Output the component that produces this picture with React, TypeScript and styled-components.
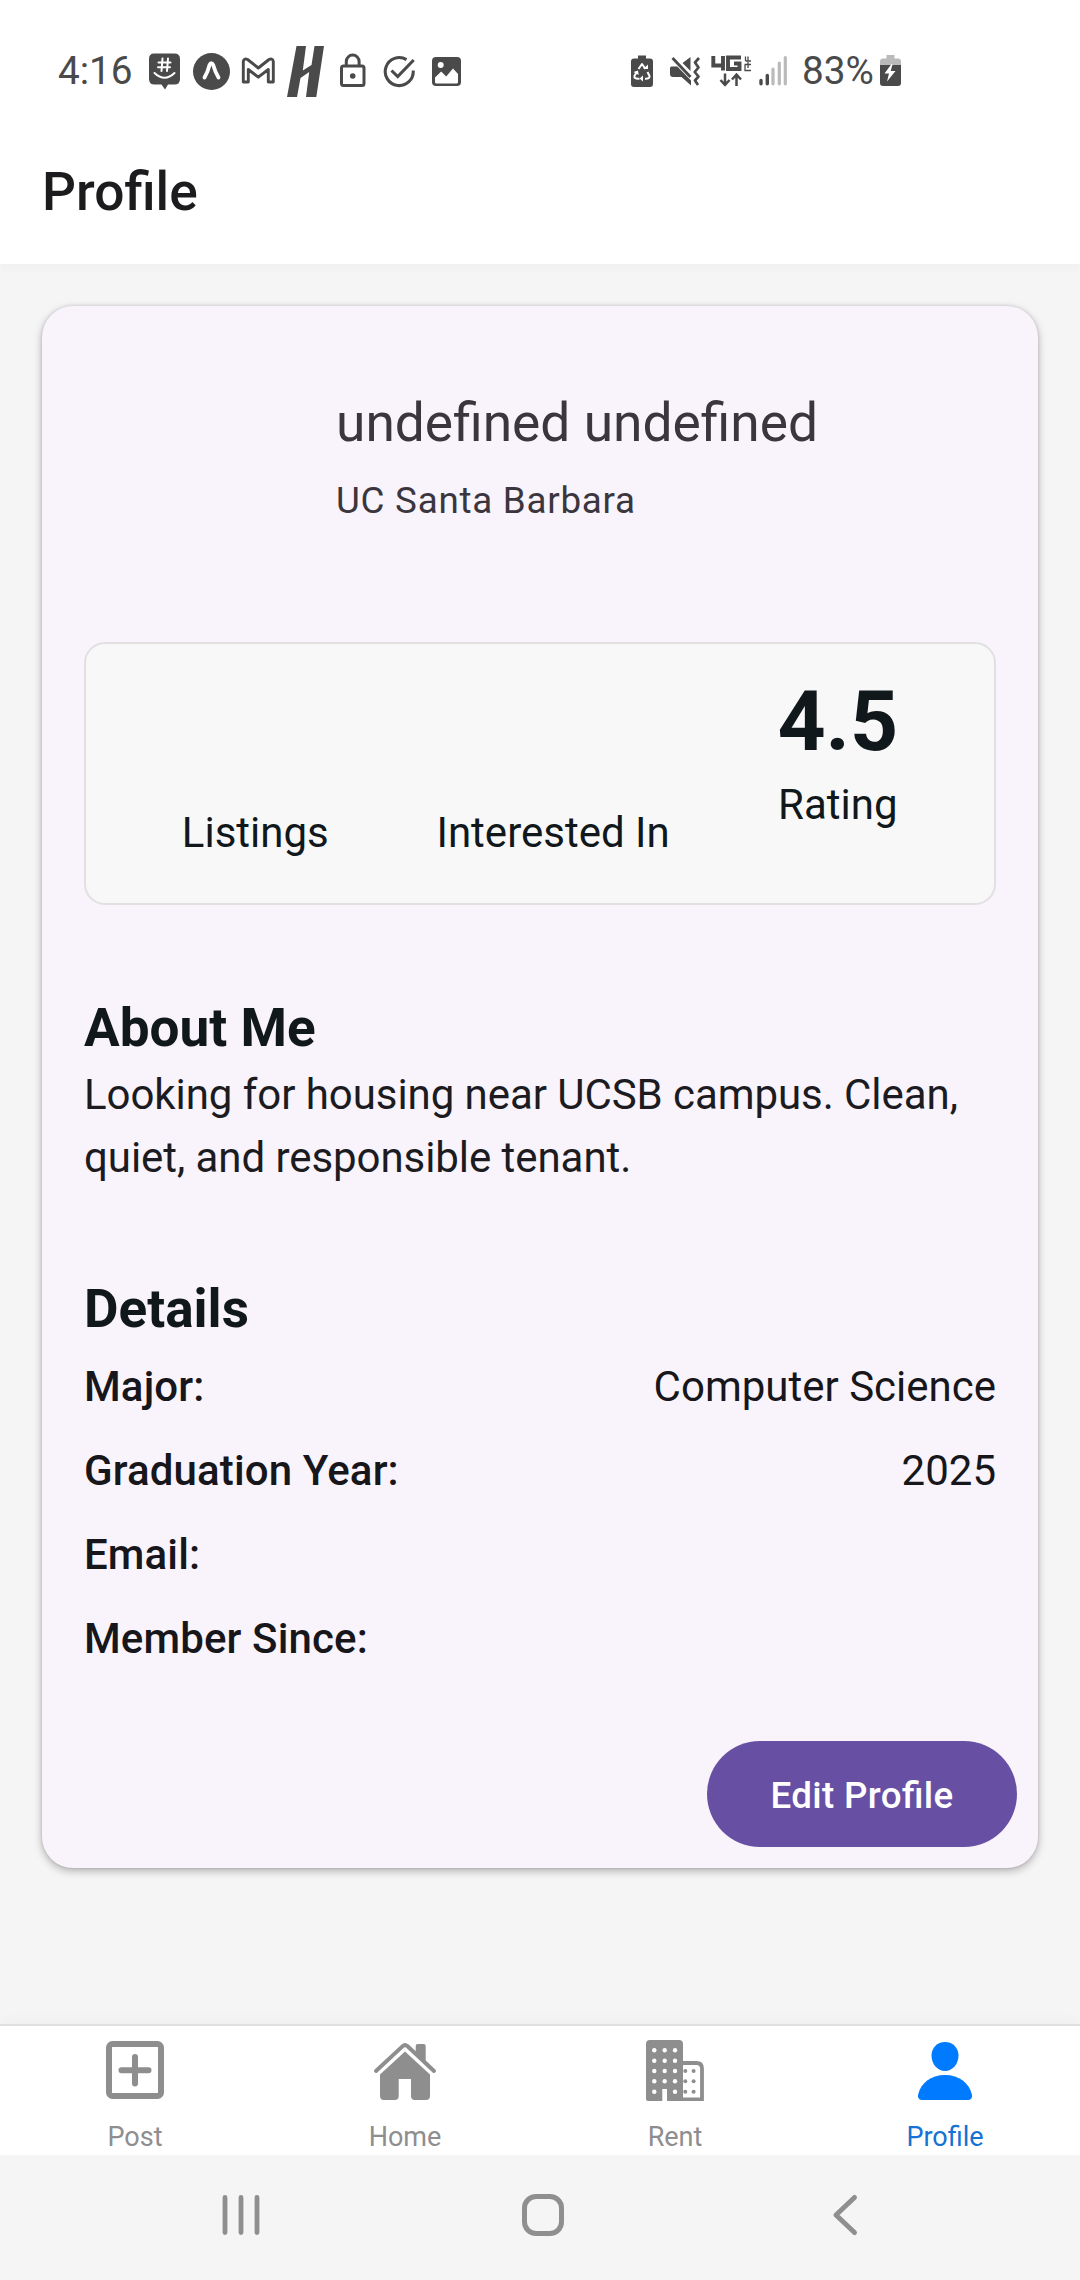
import React from "react";
import styled, { createGlobalStyle } from "styled-components";

const GlobalStyle = createGlobalStyle`
  * { box-sizing: border-box; }
  body {
    margin: 0;
    background: #f5f5f5;
    font-family: Roboto, "Noto Sans", sans-serif;
    font-feature-settings: "liga" 1;
  }
`;

const Screen = styled.div`
  width: 1080px;
  height: 2280px;
  display: flex;
  flex-direction: column;
  background: #f5f5f5;
  overflow: hidden;
`;

const StatusBar = styled.div`
  height: 122px;
  padding: 46px 179px 0 58px;
  display: flex;
  justify-content: space-between;
  background: #fff;
  color: #4a4a4a;
`;

const StatusGroup = styled.div`
  display: flex;
  align-items: flex-start;
  height: 52px;
`;

const StatusText = styled.span<{ $width: number; $gap?: number }>`
  width: ${(p) => p.$width}px;
  margin-left: ${(p) => p.$gap ?? 0}px;
  font-size: 38.7px;
  line-height: 50px;
  white-space: nowrap;
`;

const StatusGlyph = styled.svg<{ $gap: number }>`
  display: block;
  flex: none;
  margin-left: ${(p) => p.$gap}px;
`;

const Header = styled.header`
  height: 142px;
  padding: 39px 42px 0;
  background: #fff;
  box-shadow: 0 8px 1px -1px #f2f2f2;
`;

const HeaderTitle = styled.h1`
  margin: 0;
  font-size: 53.3px;
  line-height: 63px;
  font-weight: 500;
  color: #1c1c1e;
`;

const Content = styled.main`
  flex: 1;
  padding: 42px 42px 0;
`;

const Card = styled.section`
  height: 1562px;
  display: flex;
  flex-direction: column;
  padding: 86px 42px 21px;
  border-radius: 31px;
  background: #f9f3fb;
  box-shadow: 0 3px 8px rgba(0, 0, 0, 0.28), 0 0 3px rgba(0, 0, 0, 0.14);
`;

const Identity = styled.div`
  height: 250px;
  padding-left: 252px;
`;

const Name = styled.div`
  font-size: 53.3px;
  line-height: 63px;
  color: #3b363d;
`;

const School = styled.div`
  margin-top: 19px;
  font-size: 36.75px;
  line-height: 53px;
  letter-spacing: 0.75px;
  color: #3b363d;
`;

const Stats = styled.div`
  height: 263px;
  display: flex;
  justify-content: space-around;
  align-items: flex-start;
  padding: 24px 42px 0;
  border: 2.6px solid #e0e0e0;
  border-radius: 21px;
  background: #f8f8f8;
`;

const Stat = styled.div`
  display: flex;
  flex-direction: column;
  align-items: center;
  color: #11181c;
`;

const StatValue = styled.div<{ $empty: boolean }>`
  height: ${(p) => (p.$empty ? 133 : 105)}px;
  font-size: 84px;
  line-height: 107px;
  font-weight: 700;
`;

const StatLabel = styled.div`
  font-size: 42px;
  line-height: 63px;
`;

const Section = styled.section<{ $top: number }>`
  margin-top: ${(p) => p.$top}px;
`;

const SectionTitle = styled.h2<{ $gap: number }>`
  margin: 0 0 ${(p) => p.$gap}px;
  font-size: 53.1px;
  line-height: 63px;
  font-weight: 700;
  color: #11181c;
`;

const Paragraph = styled.p`
  margin: 0;
  font-size: 42px;
  line-height: 63px;
  letter-spacing: -0.06px;
  color: #1c1b1f;
`;

const DetailRow = styled.div`
  display: flex;
  justify-content: space-between;
  margin-bottom: 21px;
  font-size: 42px;
  line-height: 63px;
  color: #16161b;
`;

const DetailLabel = styled.span`
  font-weight: 500;
  letter-spacing: 0.13px;
`;

const DetailValue = styled.span``;

const EditButton = styled.button`
  width: 310px;
  height: 106px;
  margin: auto -21px 0 auto;
  padding: 2px 0 0;
  border: 0;
  border-radius: 53px;
  background: #6750a4;
  color: #fff;
  font-family: inherit;
  font-size: 36.75px;
  font-weight: 500;
  letter-spacing: 0.34px;
  font-feature-settings: "liga" 1;
`;

const TabBar = styled.nav`
  height: 131px;
  display: grid;
  grid-template-columns: repeat(4, 1fr);
  border-top: 2px solid #e0e0e0;
  background: #fff;
  box-shadow: 0 -3px 14px rgba(0, 0, 0, 0.03);
`;

const Tab = styled.div<{ $active?: boolean }>`
  display: flex;
  flex-direction: column;
  align-items: center;
  padding-top: 11px;
  color: ${(p) => (p.$active ? "#007aff" : "#8e8e8f")};
`;

const TabIcon = styled.svg`
  display: block;
`;

const TabLabel = styled.span<{ $active?: boolean }>`
  margin-top: 20px;
  font-size: 27px;
  line-height: 32px;
  color: ${(p) => (p.$active ? "#1673d4" : "#8e8e8f")};
`;

const NavBar = styled.div`
  height: 125px;
  display: grid;
  grid-template-columns: 298px 48px 1fr;
  align-items: start;
  padding: 36px 221px 0;
  background: #f5f5f5;
`;

const NavIcon = styled.svg<{ $end?: boolean }>`
  display: block;
  justify-self: ${(p) => (p.$end ? "end" : "start")};
`;

function LeftStatus() {
  return (
    <StatusGroup>
      <StatusText $width={75}>4:16</StatusText>
      <StatusGlyph $gap={16} width="31" height="52" viewBox="149 46 31 52">
        <path d="M154 53.500h20.500q5.500 0 5.500 5.500v20q0 5.500-5.500 5.500H168L165 89.500 161.500 84.500H154.500q-5.500 0-5.500-5.500V59q0-5.500 5-5.500z" fill="#4a4a4a" />
        <path d="M162.500 58.500l-1 12.500M168 58.500l-1 12.500M158.500 62.500h12M158 67.300h12M154.500 73q10 9.500 20 0" fill="none" stroke="#fff" strokeWidth="2" strokeLinecap="round" />
      </StatusGlyph>
      <StatusGlyph $gap={12} width="38" height="52" viewBox="192 46 38 52">
        <circle cx="211.500" cy="71.500" r="18.500" fill="#4a4a4a" />
        <path d="M204.500 77.500q3.500-6 5-12.500 1.700-3.800 3.700 0 1.800 6.500 5.300 12.500" fill="none" stroke="#fff" strokeWidth="3.800" strokeLinecap="round" strokeLinejoin="round" />
      </StatusGlyph>
      <StatusGlyph $gap={11} width="36" height="52" viewBox="241 46 36 52">
        <path d="M243.300 61.500v20.500h5V69.500l10 7.700 10-7.700V82h5V61.500q-.5-3.500-4.300-2L258.300 68l-10.700-8.500q-3.800-1.500-4.300 2z" fill="none" stroke="#4a4a4a" strokeWidth="2.900" strokeLinejoin="round" />
      </StatusGlyph>
      <StatusGlyph $gap={10} width="38" height="52" viewBox="287 46 38 52">
        <path d="M296.500 46h9.500l-3.200 24.500 8.700-5.500 3-19h9.500l-7.700 51H306l3.200-25-8.700 6-3.500 19h-10z" fill="#4a4a4a" />
      </StatusGlyph>
      <StatusGlyph $gap={14} width="28" height="52" viewBox="339 46 28 52">
        <rect x="341.500" y="66" width="22.500" height="19.500" rx="2" fill="none" stroke="#4a4a4a" strokeWidth="3" />
        <path d="M346.300 66v-4.500a6.300 6.300 0 0 1 12.800 0V66" fill="none" stroke="#4a4a4a" strokeWidth="3" />
        <circle cx="352.700" cy="76" r="2.800" fill="#4a4a4a" />
      </StatusGlyph>
      <StatusGlyph $gap={16} width="34" height="52" viewBox="383 46 34 52">
        <path d="M406.500 59.600A14 14 0 1 0 413.200 70.500" fill="none" stroke="#4a4a4a" strokeWidth="3.100" />
        <path d="M391.500 70.500l6.200 6L413.700 60" fill="none" stroke="#4a4a4a" strokeWidth="3.100" />
      </StatusGlyph>
      <StatusGlyph $gap={14} width="31" height="52" viewBox="431 46 31 52">
        <rect x="432" y="57" width="29" height="29" rx="4" fill="#4a4a4a" />
        <circle cx="440.700" cy="65" r="3" fill="#fff" />
        <path d="M435 77.500l6.200-6 5 5 6.800-8 5 5.500v8q0 1.500-1.500 1.500h-20q-1.500 0-1.500-1.500z" fill="#fff" />
      </StatusGlyph>
    </StatusGroup>
  );
}

function RightStatus() {
  return (
    <StatusGroup>
      <StatusGlyph $gap={0} width="22" height="52" viewBox="631 46 22 52">
        <path d="M638 55.500h8v3h4q3 0 3 3V84q0 3-3 3h-16q-3 0-3-3V61.500q0-3 3-3h4z" fill="#4a4a4a" />
        <path d="M638.500 69l3.500-5 3.500 5M647.500 72l2 4q.5 3-4.500 2.700M639.500 78.700q-6 .5-5-3l2.500-4" fill="none" stroke="#fff" strokeWidth="2" strokeLinejoin="round" />
        <path d="M643 75.500v6l-3.500-3zM643 69h5v-4.500zM633.500 72l4.500-1.500.7 4.500z" fill="#fff" />
      </StatusGlyph>
      <StatusGlyph $gap={16} width="32" height="52" viewBox="669 46 32 52">
        <path d="M670 68q0-1.500 1.500-1.500h5.800L691 80.500v5L681.500 77H673q-3 0-3-3zM682.500 63l8-6v14z" fill="#4a4a4a" />
        <path d="M672.500 58l18 19" stroke="#4a4a4a" strokeWidth="2.800" />
        <path d="M699 58l-4 4.500 3.500 5-3.800 4.500 3.800 4.500-3.500 4 3 4.500" fill="none" stroke="#4a4a4a" strokeWidth="2.700" strokeLinejoin="round" />
      </StatusGlyph>
      <StatusGlyph $gap={10} width="40" height="52" viewBox="711 46 40 52">
        <path d="M713.300 56v9.500h10.500M723 56v14.500M741 57.500h-13V69h11.500v-5.500h-5.500" fill="none" stroke="#4a4a4a" strokeWidth="3.900" />
        <path d="M745 65v5.500h6M745.500 61h5.500M744.500 64.500h6.500M748 62v6M745.500 56.500v4.500M748 56.500v4" fill="none" stroke="#4a4a4a" strokeWidth="1.300" />
        <path d="M725 73.500v11.500M720.500 80l4.500 5 4.500-5M736.500 86V74.500M732 79.500l4.500-5 4.500 5" fill="none" stroke="#4a4a4a" strokeWidth="2.500" />
      </StatusGlyph>
      <StatusGlyph $gap={7} width="30" height="52" viewBox="758 46 30 52">
        <path d="M761 80.500v3.300M767.300 75.500v8.300" stroke="#4a4a4a" strokeWidth="3.400" strokeLinecap="round" />
        <path d="M773 69v14.800M779.300 63v20.800M785.300 57.500v26.300" stroke="#bababa" strokeWidth="3.200" strokeLinecap="round" />
      </StatusGlyph>
      <StatusText $width={77} $gap={14}>83%</StatusText>
      <StatusGlyph $gap={1} width="21" height="52" viewBox="880 46 21 52">
        <path d="M886.500 55h8v3.500h3.500q3 0 3 3V66h-21v-4.500q0-3 3-3h3.500z" fill="#bababa" />
        <path d="M880 65h21v18q0 3-3 3h-15q-3 0-3-3z" fill="#4a4a4a" />
        <path d="M891.500 64l-7 9.500h4.500L887 81.500l8.500-10.500h-4.800l1.800-6.500z" fill="#fff" />
      </StatusGlyph>
    </StatusGroup>
  );
}

function PostIcon() {
  return (
    <TabIcon width="64" height="64" viewBox="103 2037 64 64" fill="none" stroke="currentColor" strokeWidth="6" strokeLinecap="round">
      <rect x="109" y="2044" width="52" height="52" rx="3.500" />
      <path d="M135 2057v26.500M121.500 2070.200h27" />
    </TabIcon>
  );
}

function HomeIcon() {
  return (
    <TabIcon width="64" height="64" viewBox="373 2037 64 64" fill="currentColor">
      <path d="M415.700 2052v-6q0-2 2-2h6q2 0 2 2v17z" />
      <path d="M376 2071l26.700-24.900q2.300-2.100 4.600 0L434 2071" fill="none" stroke="currentColor" strokeWidth="4" strokeLinecap="round" />
      <path d="M405 2051.500l25 23V2096q0 4-4 4h-11q-4 0-4-4v-17h-12.300v17q0 4-4 4H384q-4 0-4-4v-21.500z" />
    </TabIcon>
  );
}

function RentIcon() {
  const rows = [2050.3, 2060.7, 2071, 2081.3, 2091.7];
  return (
    <TabIcon width="64" height="64" viewBox="643 2037 64 64">
      <path d="M650 2040h29q4 0 4 4v57h-16V2089h-4.700v12H648q-2 0-2-2V2044q0-4 4-4z" fill="currentColor" />
      <path d="M682 2063h14.500q5.500 0 5.500 5.500V2099.300H682" fill="none" stroke="currentColor" strokeWidth="3.800" />
      {rows.map((y, i) => (
        <g key={y}>
          <circle cx="654.300" cy={y} r="2.200" fill="#fff" />
          {i < 4 && <circle cx="664.700" cy={y} r="2.200" fill="#fff" />}
          <circle cx="675" cy={y} r="2.200" fill="#fff" />
          {i > 1 && <circle cx="685.300" cy={y} r="2" fill="currentColor" />}
          {i > 1 && <circle cx="693.600" cy={y} r="2" fill="currentColor" />}
        </g>
      ))}
    </TabIcon>
  );
}

function ProfileIcon() {
  return (
    <TabIcon width="64" height="64" viewBox="913 2037 64 64" fill="currentColor">
      <path d="M945 2042c8 0 13.500 6 13.500 13.500 0 8.500-6 15.500-13.500 15.500s-13.500-7-13.500-15.500c0-7.500 5.500-13.500 13.500-13.500z" />
      <path d="M945 2075c14 0 24.500 8 27 20 .5 2.700-1.300 5-4 5h-46c-2.700 0-4.500-2.300-4-5 2.500-12 13-20 27-20z" />
    </TabIcon>
  );
}

const tabs = [
  { label: "Post", icon: <PostIcon /> },
  { label: "Home", icon: <HomeIcon /> },
  { label: "Rent", icon: <RentIcon /> },
  { label: "Profile", icon: <ProfileIcon />, active: true },
];

const stats = [
  { label: "Listings", value: "" },
  { label: "Interested In", value: "" },
  { label: "Rating", value: "4.5" },
];

const details = [
  { label: "Major:", value: "Computer Science" },
  { label: "Graduation Year:", value: "2025" },
  { label: "Email:", value: "" },
  { label: "Member Since:", value: "" },
];

export default function App() {
  return (
    <Screen>
      <GlobalStyle />
      <StatusBar>
        <LeftStatus />
        <RightStatus />
      </StatusBar>
      <Header>
        <HeaderTitle>Profile</HeaderTitle>
      </Header>
      <Content>
        <Card>
          <Identity>
            <Name>undefined undefined</Name>
            <School>UC Santa Barbara</School>
          </Identity>
          <Stats>
            {stats.map((s) => (
              <Stat key={s.label}>
                <StatValue $empty={!s.value}>{s.value}</StatValue>
                <StatLabel>{s.label}</StatLabel>
              </Stat>
            ))}
          </Stats>
          <Section $top={92}>
            <SectionTitle $gap={3}>About Me</SectionTitle>
            <Paragraph>Looking for housing near UCSB campus. Clean, quiet, and responsible tenant.</Paragraph>
          </Section>
          <Section $top={89}>
            <SectionTitle $gap={14}>Details</SectionTitle>
            {details.map((d) => (
              <DetailRow key={d.label}>
                <DetailLabel>{d.label}</DetailLabel>
                <DetailValue>{d.value}</DetailValue>
              </DetailRow>
            ))}
          </Section>
          <EditButton>Edit Profile</EditButton>
        </Card>
      </Content>
      <TabBar>
        {tabs.map((t) => (
          <Tab key={t.label} $active={t.active}>
            {t.icon}
            <TabLabel $active={t.active}>{t.label}</TabLabel>
          </Tab>
        ))}
      </TabBar>
      <NavBar>
        <NavIcon width="40" height="48" viewBox="221 2191 40 48" stroke="#8f8f8f" strokeWidth="4.800" strokeLinecap="round">
          <path d="M225 2197.500v35M241 2197.500v35M257 2197.500v35" />
        </NavIcon>
        <NavIcon width="48" height="48" viewBox="519 2191 48 48" fill="none" stroke="#8f8f8f" strokeWidth="5">
          <rect x="524.500" y="2196.500" width="37" height="37" rx="11.500" />
        </NavIcon>
        <NavIcon $end width="28" height="48" viewBox="831 2191 28 48" fill="none" stroke="#8f8f8f" strokeWidth="5" strokeLinecap="round" strokeLinejoin="round">
          <path d="M854.500 2197.500L836 2215l18.500 17.500" />
        </NavIcon>
      </NavBar>
    </Screen>
  );
}
